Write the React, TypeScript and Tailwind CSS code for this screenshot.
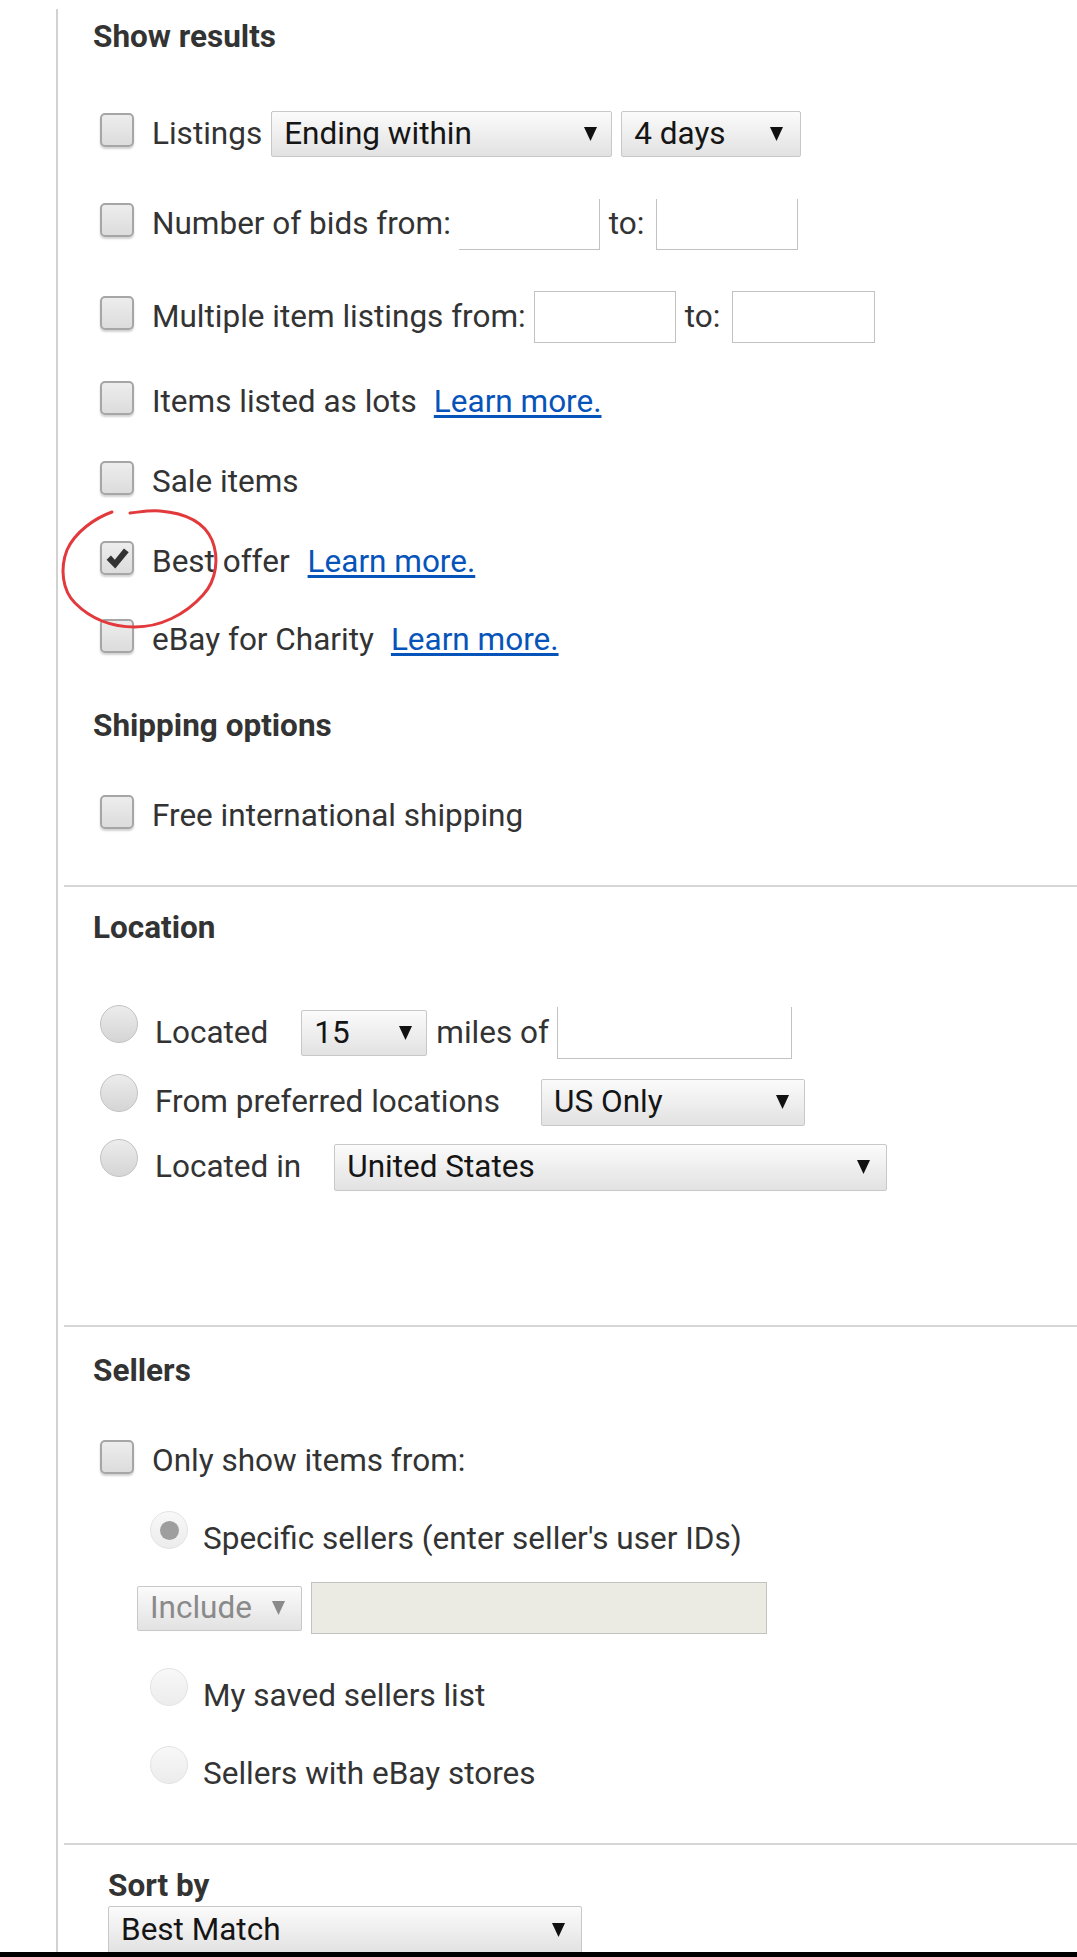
// Advanced search filters panel — "Show results", location, sellers, sort.

import type { ReactNode } from 'react';

function Arrow({ muted = false }: { muted?: boolean }) {
  return (
    <svg width="13" height="14" viewBox="0 0 13 14" className="shrink-0">
      <polygon points="0,0 13,0 6.5,14" fill={muted ? '#8a8a8a' : '#111'} />
    </svg>
  );
}

function Checkbox({ checked = false }: { checked?: boolean }) {
  return (
    <span className="-mt-2 flex h-[34px] w-[34px] shrink-0 items-center justify-center rounded-[5px] border-2 border-[#a6a6a6] bg-linear-to-b from-[#ededed] to-[#dcdcdc] shadow-[0_2px_2px_rgba(0,0,0,0.18)]">
      {checked && (
        <svg width="26" height="26" viewBox="0 0 30 30">
          <path d="M3 17 L8 12 L12.5 17 L23 4 L28.5 8.5 L13 27 Z" fill="#333" />
        </svg>
      )}
    </span>
  );
}

function Radio({ selected = false, disabled = false }: { selected?: boolean; disabled?: boolean }) {
  return (
    <span
      className={`-mt-[18px] flex h-[38px] w-[38px] shrink-0 items-center justify-center rounded-full border bg-linear-to-b ${
        disabled
          ? 'border-[#e3e3e3] from-[#f8f8f8] to-[#ececec]'
          : 'border-[#c2c2c2] from-[#ececec] to-[#d5d5d5]'
      }`}
    >
      {selected && <span className="h-[19px] w-[19px] rounded-full bg-[#9e9e9e]" />}
    </span>
  );
}

function Select({
  text,
  className,
  muted = false,
}: {
  text: string;
  className: string;
  muted?: boolean;
}) {
  return (
    <div
      className={`flex shrink-0 items-center justify-between rounded-[2px] border border-[#c8c8c8] bg-linear-to-b from-[#fbfbfb] to-[#e2e2e2] pl-[12px] pr-[14px] ${
        muted ? 'text-[#8a8a8a]' : 'text-[#151515]'
      } ${className}`}
    >
      <span>{text}</span>
      <Arrow muted={muted} />
    </div>
  );
}

function Field({ className }: { className: string }) {
  return <div className={`shrink-0 border-[#c2c2c2] bg-white ${className}`} />;
}

function Row({ className, children }: { className: string; children: ReactNode }) {
  return <div className={`flex h-[56px] items-center whitespace-nowrap ${className}`}>{children}</div>;
}

function Heading({ className, children }: { className: string; children: ReactNode }) {
  return <div className={`flex h-[56px] items-center font-bold text-[#333] ${className}`}>{children}</div>;
}

function Learn({ className = 'ml-[17px]' }: { className?: string }) {
  return <a className={`text-[#0654ba] underline underline-offset-[3px] ${className}`}>Learn more.</a>;
}

function Separator() {
  return <div className="ml-[6px] h-[2px] bg-[#d6d6d6]" />;
}

export default function App() {
  return (
    <div className="relative h-[1957px] overflow-hidden bg-white font-['Roboto',sans-serif] text-[31.5px] leading-[36px] text-[#333]">
      <div className="ml-[56px] h-full border-l-2 border-[#d2d2d2]">
        {/* Show results */}
        <div className="pl-[35px]">
          <Heading className="mt-[9px]">Show results</Heading>

          <Row className="ml-[7px] mt-[41px] gap-[18px]">
            <Checkbox />
            <div className="flex items-center">
              <span>Listings</span>
              <Select text="Ending within" className="ml-[9px] h-[46px] w-[341px]" />
              <Select text="4 days" className="ml-[9px] h-[46px] w-[180px] pr-[17px]" />
            </div>
          </Row>

          <Row className="ml-[7px] mt-[34px] gap-[18px]">
            <Checkbox />
            <div className="flex items-center">
              <span>Number of bids from:</span>
              <Field className="ml-[8px] h-[51px] w-[141px] border-r border-b" />
              <span className="ml-[9px]">to:</span>
              <Field className="ml-[12px] h-[51px] w-[142px] border-x border-b" />
            </div>
          </Row>

          <Row className="ml-[7px] mt-[37px] gap-[18px]">
            <Checkbox />
            <div className="flex items-center">
              <span>Multiple item listings from:</span>
              <Field className="ml-[8px] h-[52px] w-[142px] border" />
              <span className="ml-[9px]">to:</span>
              <Field className="ml-[12px] h-[52px] w-[143px] border" />
            </div>
          </Row>

          <Row className="ml-[7px] mt-[29px] gap-[18px]">
            <Checkbox />
            <div className="flex items-center">
              <span>Items listed as lots</span>
              <Learn />
            </div>
          </Row>

          <Row className="ml-[7px] mt-[24px] gap-[18px]">
            <Checkbox />
            <span>Sale items</span>
          </Row>

          <Row className="ml-[7px] mt-[24px] gap-[18px]">
            <Checkbox checked />
            <div className="flex items-center">
              <span>Best offer</span>
              <Learn className="ml-[18px]" />
            </div>
          </Row>

          <Row className="ml-[7px] mt-[22px] gap-[18px]">
            <Checkbox />
            <div className="flex items-center">
              <span>eBay for Charity</span>
              <Learn />
            </div>
          </Row>

          <Heading className="mt-[30px]">Shipping options</Heading>

          <Row className="ml-[7px] mt-[34px] gap-[18px]">
            <Checkbox />
            <span>Free international shipping</span>
          </Row>
        </div>

        <div className="mt-[41px]">
          <Separator />
        </div>

        {/* Location */}
        <div className="pl-[35px]">
          <Heading className="mt-[13px]">Location</Heading>

          <Row className="ml-[7px] mt-[49px] gap-[17px]">
            <Radio />
            <div className="flex items-center">
              <span>Located</span>
              <Select text="15" className="ml-[33px] h-[46px] w-[126px] pr-[13px]" />
              <span className="ml-[9px]">miles of</span>
              <Field className="ml-[8px] h-[52px] w-[235px] border-x border-b" />
            </div>
          </Row>

          <Row className="ml-[7px] mt-[13px] gap-[17px]">
            <Radio />
            <div className="flex items-center">
              <span>From preferred locations</span>
              <Select text="US Only" className="ml-[41px] h-[47px] w-[264px] pr-[15px]" />
            </div>
          </Row>

          <Row className="ml-[7px] mt-[9px] gap-[17px]">
            <Radio />
            <div className="flex items-center">
              <span>Located in</span>
              <Select text="United States" className="ml-[33px] h-[47px] w-[553px] pr-[16px]" />
            </div>
          </Row>
        </div>

        <div className="mt-[130px]">
          <Separator />
        </div>

        {/* Sellers */}
        <div className="pl-[35px]">
          <Heading className="mt-[16px]">Sellers</Heading>

          <Row className="ml-[7px] mt-[34px] gap-[18px]">
            <Checkbox />
            <span>Only show items from:</span>
          </Row>

          <Row className="ml-[57px] mt-[22px] gap-[15px]">
            <Radio selected disabled />
            <span>Specific sellers (enter seller's user IDs)</span>
          </Row>

          <Row className="ml-[44px] mt-[13px]">
            <Select text="Include" muted className="h-[45px] w-[165px] pr-[16px]" />
            <Field className="ml-[9px] h-[52px] w-[456px] border !bg-[#ebebe4]" />
          </Row>

          <Row className="ml-[57px] mt-[32px] gap-[15px]">
            <Radio disabled />
            <span>My saved sellers list</span>
          </Row>

          <Row className="ml-[57px] mt-[22px] gap-[15px]">
            <Radio disabled />
            <span>Sellers with eBay stores</span>
          </Row>
        </div>

        <div className="mt-[41px]">
          <Separator />
        </div>

        {/* Sort by */}
        <div className="pl-[50px]">
          <div className="mt-[23px] font-bold">Sort by</div>
          <Select text="Best Match" className="mt-[2px] h-[48px] w-[474px] pr-[16px]" />
        </div>
      </div>

      {/* hand-drawn red circle around "Best offer" */}
      <svg className="pointer-events-none absolute left-0 top-0" width="1077" height="1957" viewBox="0 0 1077 1957">
        <path
          d="M112,512 C95,518 75,532 67,550 C60,568 62,590 75,603 C90,618 110,627 135,627 C160,627 185,615 203,595 C217,580 219,557 212,540 C204,522 185,513 160,511 C150,510 140,512 130,513"
          fill="none"
          stroke="#e2393c"
          strokeWidth="3"
          strokeLinecap="round"
        />
      </svg>

      <div className="absolute bottom-0 left-0 right-0 h-[5px] bg-black" />
    </div>
  );
}
